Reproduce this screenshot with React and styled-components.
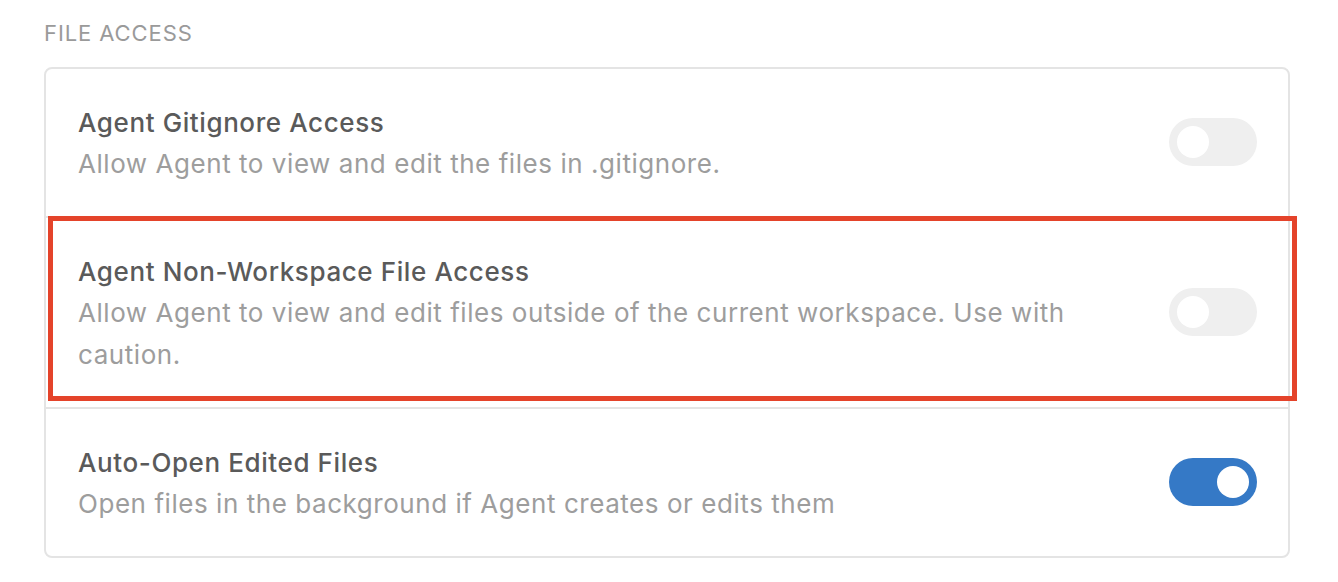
import React from "react";
import styled, { createGlobalStyle } from "styled-components";

const GlobalStyle = createGlobalStyle`
  html, body {
    margin: 0;
    padding: 0;
    background: #ffffff;
  }
  body {
    font-family: Inter, "Noto Sans", "Liberation Sans", sans-serif;
    -webkit-font-smoothing: antialiased;
  }
`;

const Page = styled.div`
  padding: 19px 48px 0 44px;
`;

const SectionLabel = styled.div`
  font-size: 22px;
  line-height: 28px;
  font-weight: 400;
  color: #9a9a9a;
  letter-spacing: 0.9px;
  margin-bottom: 20px;
`;

const Card = styled.div`
  width: 1246px;
  box-sizing: border-box;
  border: 2px solid #e4e4e4;
  border-radius: 8px;
  background: #fff;
`;

const Row = styled.div`
  position: relative;
  display: flex;
  align-items: center;
  justify-content: space-between;
  gap: 40px;
  padding: 33px 31px 31px 32px;
  border-top: ${(p) => (p.$first ? "none" : "2px solid #e4e4e4")};

  ${(p) =>
    p.$highlighted &&
    `
    &::after {
      content: "";
      position: absolute;
      left: 2px;
      right: -9px;
      top: -2px;
      bottom: 6px;
      border: 5px solid #e4432a;
      pointer-events: none;
    }
  `}
`;

const Text = styled.div`
  flex: 1;
  min-width: 0;
  max-width: 1040px;
`;

const Title = styled.div`
  font-size: 26px;
  line-height: 41px;
  font-weight: 500;
  letter-spacing: 0.6px;
  color: #5a5a5a;
`;

const Description = styled.div`
  font-size: 26px;
  line-height: 42px;
  font-weight: 400;
  letter-spacing: 0.55px;
  color: #9d9d9d;
`;

const Toggle = styled.div`
  flex: none;
  width: 88px;
  height: 48px;
  margin-bottom: 4px;
  border-radius: 24px;
  background: ${(p) => (p.$on ? "#3579c6" : "#efefef")};
  display: flex;
  align-items: center;
  justify-content: ${(p) => (p.$on ? "flex-end" : "flex-start")};
  padding: 0 8px;
  box-sizing: border-box;
`;

const Knob = styled.div`
  width: 32px;
  height: 32px;
  border-radius: 50%;
  background: #ffffff;
`;

const settings = [
  {
    title: "Agent Gitignore Access",
    description: "Allow Agent to view and edit the files in .gitignore.",
    on: false,
  },
  {
    title: "Agent Non-Workspace File Access",
    description:
      "Allow Agent to view and edit files outside of the current workspace. Use with caution.",
    on: false,
    highlighted: true,
  },
  {
    title: "Auto-Open Edited Files",
    description: "Open files in the background if Agent creates or edits them",
    on: true,
  },
];

export default function App() {
  return (
    <>
      <GlobalStyle />
      <Page>
        <SectionLabel>FILE ACCESS</SectionLabel>
        <Card>
          {settings.map((s, i) => (
            <Row key={s.title} $first={i === 0} $highlighted={s.highlighted}>
              <Text>
                <Title>{s.title}</Title>
                <Description>{s.description}</Description>
              </Text>
              <Toggle $on={s.on}>
                <Knob />
              </Toggle>
            </Row>
          ))}
        </Card>
      </Page>
    </>
  );
}
